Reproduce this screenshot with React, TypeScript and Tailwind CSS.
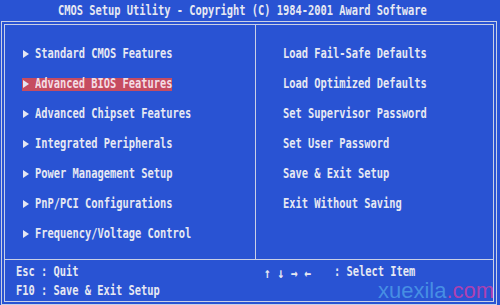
import React from "react";

const mono = { fontFamily: '"DejaVu Sans Mono", "Liberation Mono", monospace' };

function T({ children }: { children: React.ReactNode }) {
  return <span className="inline-block origin-left scale-x-[0.865] scale-y-[1.12] whitespace-pre">{children}</span>;
}

function Arrow() {
  return (
    <svg width="6" height="8" viewBox="0 0 6 8" className="shrink-0">
      <path d="M0 0 L6 4 L0 8 Z" fill="#e4e6f2" />
    </svg>
  );
}

const left = [
  "Standard CMOS Features",
  "Advanced BIOS Features",
  "Advanced Chipset Features",
  "Integrated Peripherals",
  "Power Management Setup",
  "PnP/PCI Configurations",
  "Frequency/Voltage Control",
];
const right = [
  "Load Fail-Safe Defaults",
  "Load Optimized Defaults",
  "Set Supervisor Password",
  "Set User Password",
  "Save & Exit Setup",
  "Exit Without Saving",
];

export default function App() {
  return (
    <div
      className="relative w-[500px] h-[305px] overflow-hidden bg-[#2953d3] text-[#e6e8f2] font-bold text-[12px]"
      style={mono}
    >
      <div className="h-[21px] pl-[58px] flex items-center leading-none">
        <T>CMOS Setup Utility - Copyright (C) 1984-2001 Award Software</T>
      </div>
      <div className="ml-[1px] mr-[3px] h-[284px] border-[4px] border-double border-[#c9d0e6] flex flex-col">
        <div className="flex h-[237px] border-b border-[#c9d0e6]">
          <div className="w-[251px] border-r border-[#c9d0e6] pt-[14px] pl-[17px]">
            {left.map((t, i) => (
              <div key={t} className="h-[30px] flex items-center">
                <div
                  className={
                    "flex items-center h-[13px] w-[150px] pl-[1px] " +
                    (i === 1 ? "bg-[#c64c60] text-[#f4dde4]" : "")
                  }
                >
                  <Arrow />
                  <span className="ml-[6px]">
                    <T>{t}</T>
                  </span>
                </div>
              </div>
            ))}
          </div>
          <div className="flex-1 pt-[14px] pl-[27px]">
            {right.map((t) => (
              <div key={t} className="h-[30px] flex items-center">
                <T>{t}</T>
              </div>
            ))}
          </div>
        </div>
        <div className="flex pt-[3px] leading-[19px]">
          <div className="w-[260px] pl-[11px]">
            <div><T>Esc : Quit</T></div>
            <div><T>F10 : Save &amp; Exit Setup</T></div>
          </div>
          <div className="flex -ml-[1px]">
            <span className="w-[70px] text-[13px]"><T>↑ ↓ → ←</T></span>
            <span><T>: Select Item</T></span>
          </div>
        </div>
      </div>
      <div
        className="absolute left-[378px] top-[280px] text-[22px] font-normal leading-none"
        style={{ fontFamily: '"Liberation Sans", Arial, sans-serif' }}
      >
        <span className="text-[#4f9fe8]/80">xuexila</span>
        <span className="text-[#d23ca8]/80">.com</span>
      </div>
    </div>
  );
}
